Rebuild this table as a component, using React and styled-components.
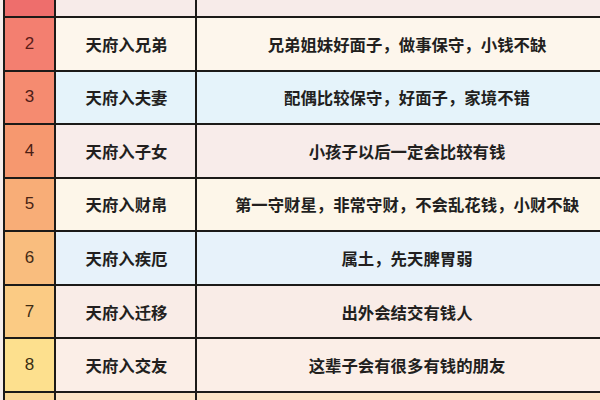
import React from 'react';
import styled, { createGlobalStyle } from 'styled-components';

const GlobalStyle = createGlobalStyle`
  html, body {
    margin: 0;
    padding: 0;
    background: #f7eeec;
    overflow: hidden;
  }
`;

const Page = styled.div`
  width: 600px;
  height: 400px;
  overflow: hidden;
  background: #f7eeec;
  font-family: "Noto Sans CJK SC", "Noto Sans", sans-serif;
`;

const Table = styled.div`
  margin-top: -35.6px;
  margin-left: 3px;
  width: 620px;
  border-left: 2px solid #1c1a18;
`;

const Row = styled.div`
  display: grid;
  grid-template-columns: 51px 141px 1fr;
  height: 53.57px;
  box-sizing: border-box;
  border-bottom: 2px solid #1c1a18;
  background: ${(p) => p.$bg};
`;

const NumCell = styled.div`
  display: flex;
  align-items: center;
  justify-content: center;
  box-sizing: border-box;
  border-right: 2px solid #1c1a18;
  background: ${(p) => p.$bg};
  color: ${(p) => p.$ink};
  font-family: "Liberation Sans", Arial, sans-serif;
  font-size: 17px;
`;

const NameCell = styled.div`
  display: flex;
  align-items: center;
  justify-content: center;
  box-sizing: border-box;
  border-right: 2px solid #1c1a18;
  padding-left: 2px;
  color: #221f1e;
  font-size: 16.4px;
  font-weight: 700;
`;

const DescCell = styled.div`
  display: flex;
  align-items: center;
  justify-content: center;
  padding-right: 8px;
  color: #221f1e;
  font-size: 16.4px;
  font-weight: 700;
`;

// first and last rows are only a sliver in the shot, so they carry no text
const rows = [
  { id: 'top', n: '', name: '', desc: '', bg: '#f7ebe9', num: '#ee6e6c', ink: '#5b1c18' },
  { id: 2, n: '2', name: '天府入兄弟', desc: '兄弟姐妹好面子，做事保守，小钱不缺', bg: '#fdf6ec', num: '#f37f70', ink: '#5b1c18' },
  { id: 3, n: '3', name: '天府入夫妻', desc: '配偶比较保守，好面子，家境不错', bg: '#e5f3fa', num: '#f58b70', ink: '#4e1c16' },
  { id: 4, n: '4', name: '天府入子女', desc: '小孩子以后一定会比较有钱', bg: '#f8ecea', num: '#f6986f', ink: '#4a1e14' },
  { id: 5, n: '5', name: '天府入财帛', desc: '第一守财星，非常守财，不会乱花钱，小财不缺', bg: '#fdf6e9', num: '#f8ad77', ink: '#4a2414' },
  { id: 6, n: '6', name: '天府入疾厄', desc: '属土，先天脾胃弱', bg: '#e7f2fa', num: '#f9bd7e', ink: '#452a14' },
  { id: 7, n: '7', name: '天府入迁移', desc: '出外会结交有钱人', bg: '#f9ece7', num: '#fbcb84', ink: '#3e2c14' },
  { id: 8, n: '8', name: '天府入交友', desc: '这辈子会有很多有钱的朋友', bg: '#fbeee7', num: '#fde08e', ink: '#3a2e12' },
  { id: 'bottom', n: '', name: '', desc: '', bg: '#fbe3c6', num: '#fbd896', ink: '#3a2e12' },
];

const App = () => {
  return (
    <Page>
      <GlobalStyle />
      <Table>
        {rows.map((r) => (
          <Row key={r.id} $bg={r.bg}>
            <NumCell $bg={r.num} $ink={r.ink}>{r.n}</NumCell>
            <NameCell>{r.name}</NameCell>
            <DescCell>{r.desc}</DescCell>
          </Row>
        ))}
      </Table>
    </Page>
  );
};

export default App;
